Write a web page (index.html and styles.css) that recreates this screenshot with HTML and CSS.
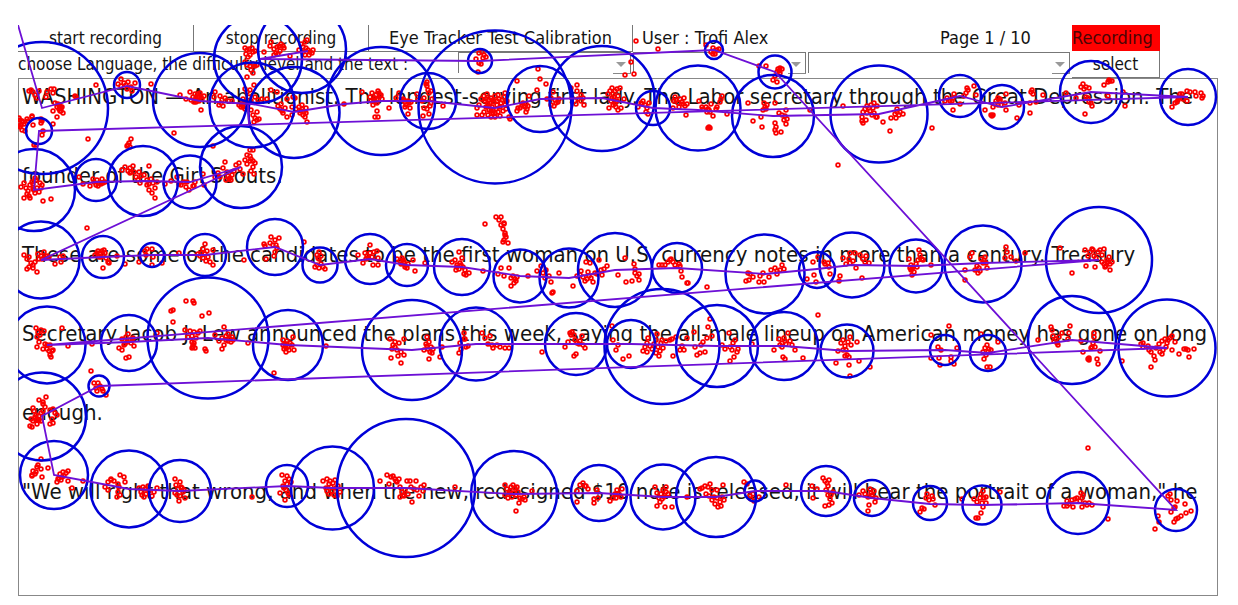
FILE: index.html
```html
<!DOCTYPE html>
<html lang="en">
<head>
<meta charset="utf-8">
<title>Eye Tracker Test</title>
<link rel="stylesheet" href="styles.css">
</head>
<body>
<main class="tracker">
  <div class="bar bar-actions">
    <button class="action" type="button">start recording</button>
    <button class="action" type="button">stop recording</button>
    <button class="action action-title" type="button">Eye Tracker Test Calibration</button>
    <span class="info user">User : Trofi Alex</span>
    <span class="info">Page 1 / 10</span>
    <span class="info status">Recording</span>
  </div>
  <div class="bar bar-choice">
    <label class="prompt" for="language">choose Language, the difficulty level and the text :</label>
    <div class="combo"><select id="language"><option></option></select></div>
    <div class="combo"><select aria-label="difficulty level"><option></option></select></div>
    <div class="combo"><select aria-label="text"><option></option></select></div>
    <button class="pick" type="button">select</button>
  </div>
  <article class="reading">
    <span>WASHINGTON — An abolitionist. The longest-serving first lady. The Labor secretary through the Great Depression. The</span>
    <span>founder of the Girl Scouts.</span>
    <span>These are some of the candidates to be the first woman on U.S. currency notes in more than a century. Treasury</span>
    <span>Secretary Jacob J. Lew announced the plans this week, saying the all-male lineup on American money has gone on long</span>
    <span>enough.</span>
    <span>"We will right that wrong, and when the new, redesigned $10 note is released, it will bear the portrait of a woman," he</span>
  </article>
  <svg class="gaze" aria-hidden="true">
    <defs>
      <marker id="dot" markerUnits="userSpaceOnUse" markerWidth="6" markerHeight="6" refX="3" refY="3"><circle class="sample" cx="3" cy="3" r="1.9"/></marker>
    </defs>
    <g transform="translate(-18 -25)">
      <g class="samples">
        <polyline points="29,91 31,90 33,92 35,95 37,98 39,91 46,97 47,92 51,89 53,93 54,89 55,103 57,107 59,109 60,106 61,111 62,107 63,113 58,104 53,111 57,117 53,124 59,105 61,108 60,111 75,96 76,97 96,85 32,116 32,117 41,119 42,121 43,131 42,135 34,145 36,145 33,125 41,123 20,120 22,121 19,123 21,125 23,122 20,127 18,126 24,124 28,121 27,119 25,131 22,130 19,118"/>
        <polyline points="121,79 118,84 121,86 124,83 126,85 127,89 131,87 132,91 128,82 135,83 151,84 88,139 131,139 129,143 127,146 130,147 128,145 174,133 180,95 186,99 190,92 193,97 195,94 196,98 198,94 199,101 201,97 202,99 196,102 194,102 204,96 200,93 191,100 197,100 199,97 195,100 201,110 198,97 214,97 215,92"/>
        <polyline points="220,96 221,103 219,105 223,106 225,98 232,101 229,101 222,100 239,105 241,107 243,104 245,109 246,106 248,103 245,102 243,99 243,107 241,104 245,89 247,92 250,90 249,97 254,85 255,97 258,100 262,99 251,101 253,115 255,118 257,120 259,119 254,122 251,110 257,112 267,99"/>
        <polyline points="245,48 247,50 249,49 252,48 246,54 248,57 250,55 253,52 255,51 247,65 250,66 253,64 255,66 257,65 251,70 253,73 247,77 245,62 264,52 271,42 270,46 274,55 276,53 277,47 279,46 281,44 283,46 280,51 278,54 284,48 290,56 274,49 301,44 303,47 305,42 307,40 303,52 305,55 308,50 310,52 312,53 309,55 313,50 306,48 299,50"/>
        <polyline points="271,90 277,92 287,99 293,97 295,98 278,106 280,109 282,111 283,113 285,108 281,104 287,117 292,115 292,107 296,109 300,113 302,109 304,112 305,117 307,122 303,115 306,113 306,108 299,107 302,105 301,111"/>
        <polyline points="344,104 362,92 370,97 372,93 374,100 376,95 378,91 380,96 382,99 377,103 373,105 375,102 379,93 381,95 377,111 375,117 378,117 389,108 371,101 375,98 377,99 396,98 399,93 403,99 405,102 406,105 408,101 409,103 410,108 408,114 405,107 404,100 411,102 427,82 427,86 428,90 426,84 429,93 417,94 418,100 422,101 424,98 431,91 424,108 427,109 430,106 431,103 423,116 429,114 443,106 432,99"/>
        <polyline points="476,59 479,53 482,52 484,55 483,58 479,63 481,64 478,72 486,57 477,108 479,105 481,99 484,96 485,101 487,94 486,107 488,104 489,110 491,98 492,107 493,113 494,102 495,96 496,109 497,105 498,112 499,99 500,107 501,103 503,111 504,97 505,105 484,112 477,115 482,115 488,115 491,117 495,117 500,116 507,101 490,103 493,100 502,100 498,95 505,93 506,109 509,117 510,119 486,99 489,106 491,111 495,113 497,101 493,110 489,100"/>
        <polyline points="517,81 538,69 540,79 546,84 537,90 524,106 518,108 517,111 520,108 523,103 525,107 527,109 528,106 529,96 526,104 526,112 522,105 547,99 551,98 553,92 555,100 556,103 558,102 559,99 554,106 551,105 571,88 577,85 577,91 578,99 581,101 583,98 584,105 581,95 576,104 572,98"/>
        <polyline points="608,94 610,91 612,88 613,94 615,91 617,89 618,96 614,97 611,101 613,105 616,107 618,110 617,101 620,88 621,108 609,108 612,98 615,104 624,99 636,41 658,49 631,62 625,75 634,74 638,107 641,103 643,101 645,105 647,108 649,103 648,114 646,112 642,104"/>
        <polyline points="673,108 675,97 676,100 678,103 680,99 682,102 684,98 685,106 679,107 687,104 686,115 683,104 674,101 699,101 702,107 703,109 706,107 708,109 710,112 713,116 716,109 717,107 711,104 721,99 722,96 720,102 727,114 707,112 708,128 709,127 710,128 709,110 706,45 713,48 714,51 717,50 715,54 713,54 719,49 711,52 759,66 766,66 777,72 778,69 780,68 782,69 779,71 780,73 773,80 777,82 775,76"/>
        <polyline points="748,103 753,121 761,117 763,110 765,107 766,109 764,103 775,103 762,127 775,123 776,127 776,133 781,132 784,120 785,116 786,110 787,119 786,124 779,113 782,115 775,130 767,105 810,110 838,165 843,106 862,117 863,112 865,109 867,106 869,108 871,105 873,108 874,113 872,115 876,117 866,120 863,123 862,121 874,103 877,106 867,113 870,111 883,122 890,131 891,118 895,114 897,112 899,115 900,112 903,114 896,118 897,109 877,117 932,128"/>
        <polyline points="945,101 947,98 950,101 952,101 954,94 953,98 953,110 960,104 964,96 966,93 967,88 968,90 974,86 976,95 985,110 993,107 996,101 998,98 1000,101 1001,105 998,105 1006,110 1006,94 1005,103 991,115 992,116 993,115 1017,118 1019,105 995,104 1000,99 1030,113 1031,92 1032,90 1033,94 1030,103 1036,102 1043,95"/>
        <polyline points="1066,93 1076,98 1081,87 1083,84 1084,89 1086,87 1089,88 1086,97 1088,98 1091,103 1085,114 1092,106 1108,96 1104,85 1108,82 1110,81 1112,81 1109,80 1089,102 1125,106 1123,92 1172,107 1175,103 1177,102 1179,98 1180,94 1183,99 1187,91 1187,101 1190,92 1195,92 1196,96 1201,93 1202,98 1203,96 1178,100 1182,94"/>
        <polyline points="21,187 24,183 26,188 28,191 30,185 32,182 33,189 35,193 37,188 39,192 29,196 24,198 30,198 35,178 36,180 41,188 43,201 51,199 27,194 33,184 40,183 42,185 34,190 79,177 83,184 90,186 93,179 94,182 97,180 96,185 99,183 101,184 103,183 105,182 98,186 102,179 122,170 125,167 128,171 130,168 133,166 131,172 134,172 139,172 149,166 136,177 138,180 140,183 141,176 147,180 149,184 151,179 153,183 155,188 149,190 152,193 155,198 147,185 157,182 130,173 144,175"/>
        <polyline points="165,184 171,181 179,184 181,185 186,187 189,190 193,186 195,182 194,186 204,185 177,177 184,182 203,174 187,182 213,146 215,177 220,177 225,162 223,168 227,172 228,176 229,179 231,180 232,175 234,171 236,165 239,163 240,169 243,174 245,160 247,155 250,150 253,150 250,156 253,161 255,163 253,167 251,171 254,174 247,164 251,159 230,178 226,180 218,173 250,161"/>
        <polyline points="87,228 24,255 27,259 29,257 31,263 33,265 35,262 27,269 29,267 37,272 38,254 41,256 42,259 44,252 45,258 47,256 49,257 55,264 61,262 60,257 63,256 39,259 33,268 95,255 98,251 100,253 102,251 104,250 99,257 103,255 105,253 108,262 109,263 103,268 106,258 117,256 97,253 101,257 139,262 145,251 146,255 152,249 153,257 152,265 162,263 125,264 179,253 147,249"/>
        <polyline points="198,254 201,253 203,249 205,244 205,254 203,258 206,261 208,257 210,262 213,265 213,250 207,251 200,256 244,260 264,244 265,246 266,259 270,243 271,237 273,245 275,240 277,248 279,238 274,256 275,252 276,245 304,242 317,255 319,252 321,256 318,258 315,267 317,265 319,268 323,267 325,269 321,264 319,259"/>
        <polyline points="358,255 363,263 365,253 367,256 368,258 370,245 370,253 372,257 374,252 377,251 378,258 373,265 378,265 366,259 397,259 400,261 402,258 404,262 405,267 407,268 408,264 401,264 403,260 405,265 415,271 425,263 413,260 452,262 455,260 457,265 459,252 460,263 462,258 463,267 465,270 459,269 456,270 464,274 469,273 461,265 457,267 466,275"/>
        <polyline points="485,224 496,217 501,217 499,220 504,223 503,229 505,233 506,237 504,240 503,242 508,243 501,225 505,235 504,224 498,274 501,268 504,276 509,268 511,278 513,276 515,279 516,281 511,286 514,283 483,271 528,276 517,277 537,271 541,266 543,273 545,278 546,270 551,282 552,293 553,292 559,273 549,276"/>
        <polyline points="573,286 577,276 581,271 583,277 585,281 587,279 589,276 588,272 591,278 593,282 590,263 599,260 604,269 607,266 601,270 586,262 580,275 597,274 595,273 602,275 618,275 625,258 634,264 635,273 637,276 639,280 632,281 626,282 635,269 639,274 659,265 662,265 668,262 671,259 673,262 675,265 679,264 680,266 681,271 682,277 687,283 688,283 707,287 665,265 670,260"/>
        <polyline points="746,281 748,273 750,274 749,280 753,277 759,282 760,276 764,282 763,273 769,277 771,270 775,268 777,274 780,270 782,265 784,269 777,271 807,279 813,262 816,282 818,257 825,264 828,263 829,267 830,274 814,275 824,262 839,281 840,276 846,264 849,259 850,253 853,261 856,268 860,255 863,259 866,256 869,263 862,278 865,262 850,263 843,258 855,253"/>
        <polyline points="909,259 911,265 911,270 913,267 914,272 916,264 918,260 920,255 919,250 922,259 912,275 910,268 912,269 923,260 931,265 917,267 965,270 970,257 972,253 977,266 979,268 981,259 983,263 985,257 986,263 980,271 978,273 975,270 987,268 984,260 1006,247 1007,252 1005,258 1011,257 1016,261 1025,253 965,280 1060,248 1072,273 1086,266 1085,250 1088,256 1090,252 1093,250 1094,256 1096,258 1098,252 1100,250 1102,255 1104,249 1095,267 1102,262 1104,264 1106,266 1107,260 1109,257 1110,264 1112,262 1110,270 1108,262 1105,267 1092,249"/>
        <polyline points="36,328 38,332 41,330 44,331 62,328 37,337 39,342 37,347 43,349 45,344 47,349 49,351 50,355 51,357 52,351 47,345 50,345 53,350 68,346 40,335 119,348 122,339 124,345 126,337 127,342 128,334 130,340 131,343 133,338 134,346 122,350 126,358 129,357 125,344 132,340 92,344 157,333 171,311 173,310 186,301 193,301 194,303 202,316 209,313 173,322 185,330 188,337 190,331 192,336 194,332 196,338 193,345 195,348 192,342 193,347 194,343 200,331 205,349 206,351 198,333 192,348"/>
        <polyline points="215,335 219,341 222,338 224,327 226,336 228,334 230,339 232,337 233,340 222,349 224,345 228,341 248,343 231,342 226,340 283,340 285,344 287,341 284,349 286,352 288,347 290,343 292,345 293,337 294,350 289,350 283,345 286,348 287,344 274,373 326,346 390,339 392,349 393,345 395,347 397,350 399,343 401,352 404,339 391,358 401,363 404,355 398,356 395,342 424,350 426,344 427,337 429,342 428,349 430,352 431,347 433,349 429,359 432,353 427,346 440,357 442,347"/>
        <polyline points="460,343 464,339 464,333 466,347 461,349 465,339 459,353 468,346 482,333 485,338 488,344 490,336 492,345 493,348 497,345 500,347 505,348 509,348 542,352 565,347 568,342 570,333 572,332 574,335 575,340 579,344 576,354 574,356 580,341 583,345 585,348 582,336 577,343 571,335"/>
        <polyline points="612,326 613,340 616,350 618,345 623,359 629,356 643,351 645,347 647,343 648,338 650,346 652,349 654,344 656,340 657,334 658,347 660,351 661,343 663,348 659,356 656,353 662,340 666,341 670,340 672,339 676,337 673,356 647,352 680,350 682,346 684,350 687,338 694,332 695,347 700,353 701,345 703,342 707,338 708,327 710,319 705,352 712,336 697,355 722,345 725,349 729,333 730,347 733,343 735,340 737,352 732,350 734,357 730,361 738,349 752,344"/>
        <polyline points="774,350 779,339 782,343 784,338 786,344 788,333 790,341 782,347 783,357 785,359 792,345 795,350 803,358 780,345 785,341 818,315 836,363 838,351 841,343 843,340 845,346 848,342 850,337 851,345 857,342 847,355 849,357 845,356 849,365 859,361 870,367 850,376 846,350 843,350 931,335 938,347 941,350 949,326 940,365 951,357 957,348 951,361 954,364 931,358 939,358 985,348 987,345 989,349 986,355 984,359 991,350 987,367 990,367 981,334 998,342 988,352 983,352"/>
        <polyline points="1038,340 1051,327 1052,330 1053,336 1056,339 1057,343 1059,337 1062,333 1068,339 1070,326 1069,333 1058,345 1054,341 1081,341 1083,352 1091,348 1093,343 1094,333 1095,347 1088,359 1089,358 1089,360 1097,359 1098,364 1100,351 1094,337 1092,347 1141,344 1143,347 1149,350 1151,352 1154,356 1155,360 1151,367 1156,348 1159,344 1162,341 1165,339 1168,340 1170,338 1172,336 1160,352 1163,350 1166,347 1175,342 1172,350 1179,354 1184,349 1186,349 1188,350 1194,349 1189,357 1122,361 1162,354 1167,343 1148,346 1143,343"/>
        <polyline points="91,371 94,383 96,388 98,383 100,386 102,389 97,391 103,391 106,395 39,400 46,397 43,402 33,408 36,415 31,419 33,421 35,417 37,419 39,420 32,427 30,426 37,424 41,413 43,411 45,407 43,404 50,410 53,409 55,413 52,419 50,424 53,423 57,415 36,420 41,421 34,411 39,416"/>
        <polyline points="32,476 33,471 35,474 37,467 38,465 41,459 41,469 42,477 48,468 32,475 36,472 57,482 59,478 60,474 61,480 63,472 64,476 66,473 68,481 68,471 72,488 83,481 62,477 58,479 105,487 108,482 111,479 114,481 108,490 118,484 120,475 124,477 125,482 118,492 117,497 119,487 120,495 111,480 139,488 141,492 143,487 145,489 144,497 146,494 142,495 148,486 149,491 152,496 157,488 154,492 175,479 176,485 178,489 180,482 181,487 183,492 180,496 179,501 182,488 185,498 177,495 175,493 184,490 252,497"/>
        <polyline points="282,475 285,481 287,476 289,479 283,486 286,490 288,493 285,500 289,495 280,493 291,482 284,488 287,484 323,481 327,479 329,484 331,487 333,483 335,480 327,491 329,494 332,491 334,495 336,488 338,486 326,488 340,492 337,496 330,481 380,481 387,475 389,484 393,476 395,479 397,482 399,479 391,477 400,487 402,492 404,496 407,481 410,481 416,481 411,487 414,489 412,502 408,494 417,490 419,496 421,487 424,485 423,491 405,490 400,497 396,481 403,495 455,487"/>
        <polyline points="505,485 507,489 509,493 511,487 513,485 515,488 512,497 508,498 516,495 518,492 520,498 522,499 524,497 519,503 516,511 532,491 510,491 514,493 505,495 517,487 525,500 577,502 580,485 583,483 586,486 588,489 594,499 594,503 597,490 598,498 577,491 585,486 610,501 613,498 615,494 617,490 619,494 621,497 622,489 616,498"/>
        <polyline points="655,487 657,493 659,498 661,494 663,490 664,497 666,492 657,506 660,502 665,507 672,507 668,494 662,499 666,487 687,497 700,489 702,488 706,494 708,487 710,484 712,490 709,496 712,500 715,504 718,507 720,502 722,497 717,490 723,485 724,500 717,498 714,497 721,506 705,486 744,482 747,484 750,496 753,494 754,501 759,497 786,485 751,499"/>
        <polyline points="812,486 817,489 813,498 823,478 825,481 827,483 829,480 826,490 828,495 830,499 832,503 825,506 829,505 833,492 828,486 831,495 859,495 863,491 865,494 868,497 870,489 872,495 874,491 876,498 869,505 868,511 871,493 875,502 920,512 922,508 924,509 926,498 932,496 933,499 935,505 929,500 927,494 962,499 974,499 977,502 980,498 981,494 983,491 982,503 983,507 981,513 978,518 976,518 986,503 1000,492 984,498 986,497"/>
        <polyline points="1064,506 1067,501 1069,504 1072,500 1073,507 1077,498 1080,501 1081,493 1082,498 1082,507 1085,503 1087,505 1089,503 1092,505 1067,506 1083,495 1075,499 1108,519 1088,448 1158,516 1155,529 1159,522 1168,496 1170,494 1171,500 1177,501 1174,508 1185,504 1171,512 1174,522 1176,519 1178,518 1181,516 1186,513 1191,511 1175,507"/>
      </g>
      <g class="fixations">
        <circle cx="42" cy="108" r="66"/><circle cx="127" cy="85" r="13"/><circle cx="39" cy="131" r="13"/><circle cx="200" cy="100" r="47"/><circle cx="258" cy="59" r="44"/><circle cx="302" cy="49" r="44"/><circle cx="252" cy="105" r="42.5"/><circle cx="294" cy="112.500" r="45.500"/>
        <circle cx="381" cy="101" r="54"/><circle cx="428" cy="101" r="28"/><circle cx="495" cy="107" r="76.500"/><circle cx="480" cy="61" r="12"/><circle cx="540" cy="99" r="33"/><circle cx="602" cy="98.500" r="52.500"/><circle cx="653" cy="108" r="17"/><circle cx="698" cy="108" r="42.500"/>
        <circle cx="714" cy="50" r="9"/><circle cx="775" cy="72" r="16.500"/><circle cx="773" cy="116" r="41"/><circle cx="879" cy="114" r="48.500"/><circle cx="960" cy="96" r="21"/><circle cx="1002" cy="107" r="22"/><circle cx="1091" cy="92" r="31"/><circle cx="1188" cy="97" r="28"/>
        <circle cx="34" cy="190" r="41"/><circle cx="96" cy="180" r="21"/><circle cx="143" cy="181" r="35"/><circle cx="190" cy="182" r="26.500"/><circle cx="241" cy="167" r="41"/>
        <circle cx="41" cy="260" r="38.500"/><circle cx="103" cy="257" r="21"/><circle cx="152" cy="255" r="12"/><circle cx="205" cy="255" r="21"/><circle cx="275" cy="247" r="28"/><circle cx="320" cy="265" r="17.500"/><circle cx="370" cy="259" r="25"/><circle cx="407" cy="265" r="21"/><circle cx="462" cy="267" r="28"/><circle cx="520" cy="276" r="26.500"/><circle cx="569" cy="278" r="29.500"/><circle cx="615" cy="270" r="37"/><circle cx="677" cy="268" r="25"/><circle cx="765" cy="274" r="39.500"/><circle cx="817" cy="270" r="18"/><circle cx="852" cy="265" r="32.500"/><circle cx="916" cy="266" r="26.500"/><circle cx="983" cy="264" r="38.500"/><circle cx="1099" cy="260" r="53"/>
        <circle cx="47" cy="345" r="38.500"/><circle cx="129" cy="343" r="28"/><circle cx="208" cy="338" r="60.500"/><circle cx="288" cy="345" r="35"/><circle cx="412" cy="350" r="50"/><circle cx="476" cy="344" r="36.500"/><circle cx="576" cy="344" r="31"/><circle cx="631" cy="344" r="24"/><circle cx="662" cy="346.500" r="57.500"/><circle cx="717" cy="346" r="41"/><circle cx="784" cy="346" r="34"/><circle cx="847" cy="351" r="26.500"/><circle cx="945" cy="350" r="15"/><circle cx="988" cy="353" r="18"/><circle cx="1072" cy="340" r="44"/><circle cx="1167" cy="348" r="48.500"/>
        <circle cx="99" cy="386" r="10.500"/><circle cx="42" cy="416.500" r="44"/>
        <circle cx="54" cy="475" r="34"/><circle cx="129" cy="489" r="38.500"/><circle cx="180" cy="491" r="31"/><circle cx="287" cy="486" r="21"/><circle cx="332.500" cy="488" r="41.500"/><circle cx="406" cy="488" r="69"/><circle cx="514" cy="494" r="43"/><circle cx="599" cy="493" r="28"/><circle cx="663" cy="497" r="32.500"/><circle cx="716" cy="497" r="40"/><circle cx="755" cy="491" r="10.500"/><circle cx="826" cy="491" r="25"/><circle cx="872" cy="498" r="18"/><circle cx="930" cy="503" r="17"/><circle cx="982" cy="505" r="19.500"/><circle cx="1078" cy="503" r="31"/><circle cx="1176" cy="510" r="21"/>
      </g>
      <polyline class="path" points="18,25 42,108 127,86 200,101 252,104 294,112 344,104 381,101 428,101 495,108 540,99 602,98 653,108 698,110 773,116 879,114 960,96 1002,107 1091,92 1188,97 39,131 34,190 96,182 143,181 190,182 241,167 41,260 103,257 152,255 205,255 275,247 320,265 370,259 407,265 462,267 520,276 569,278 615,270 677,268 765,274 817,269 852,265 916,266 983,263 1099,260 47,345 129,342 208,338 288,345 412,350 476,344 576,344 631,344 717,346 784,346 847,351 945,350 988,353 1072,340 1167,348 99,386 42,416 54,475 129,489 180,491 287,486 332,488 406,488 514,494 599,493 663,497 716,497 755,491 826,491 872,498 930,504 982,505 1078,503 1176,510 775,72 714,50 480,61 260,59 308,51"/>
      <path class="path" d="M248 105 249 125"/>
    </g>
  </svg>
</main>
</body>
</html>
```
FILE: styles.css
```css
* { box-sizing: border-box; }

body {
  margin: 0;
  padding: 25px 20px 9px 18px;
  background: #fff;
  color: #141414;
  font-family: "DejaVu Sans Condensed", "Noto Sans", sans-serif;
  font-size: 17px;
}

.tracker {
  position: relative;
  display: flex;
  flex-direction: column;
  min-height: calc(100vh - 34px);
}

.bar {
  display: grid;
  height: 26px;
  line-height: 26px;
  white-space: nowrap;
}

.bar-actions { grid-template-columns: 176fr 175fr 264fr 307fr 132fr 88fr 58fr; }
.bar-choice { grid-template-columns: 440fr 175fr 175fr 264fr 88fr 58fr; }

button, select {
  font: inherit;
  color: inherit;
  background: #fff;
  border-radius: 0;
}

.action, .pick {
  min-width: 0;
  padding: 0;
  border: solid #777;
  border-width: 0 1px 1px 0;
  line-height: 26px;
}

.action-title, .info { font-size: 18px; }

.user { padding-left: 9px; }

.status {
  background: #f00;
  color: #4a0505;
}

.combo {
  position: relative;
  margin-right: 2px;
  padding: 1px 0 4px;
}

.combo select {
  display: block;
  width: 100%;
  height: 21px;
  border: solid #777;
  border-width: 1px 1px 0 1px;
  appearance: none;
}

.combo::before {
  content: "";
  position: absolute;
  right: 0;
  bottom: 4px;
  width: 18px;
  border-bottom: 1px solid #888;
}

.combo::after {
  content: "";
  position: absolute;
  right: 5px;
  top: 11px;
  border: 5px solid transparent;
  border-top-color: #999;
  border-bottom: 0;
}

.reading {
  flex: 1;
  display: flex;
  flex-direction: column;
  gap: 53px;
  margin-top: 1px;
  padding: 5px 3px 40px;
  border: 1px solid #888;
  font-size: 22px;
  line-height: 26px;
  white-space: nowrap;
}

.gaze {
  position: absolute;
  inset: 0;
  width: 100%;
  height: 100%;
  pointer-events: none;
}

.samples polyline {
  fill: none;
  stroke: none;
  marker: url(#dot);
}

.sample {
  fill: none;
  stroke: #fa0000;
  stroke-width: 1.7;
}

.fixations circle {
  fill: none;
  stroke: #0000d8;
  stroke-width: 2.5;
}

.path {
  fill: none;
  stroke: #6d10d6;
  stroke-width: 1.8;
}
```
